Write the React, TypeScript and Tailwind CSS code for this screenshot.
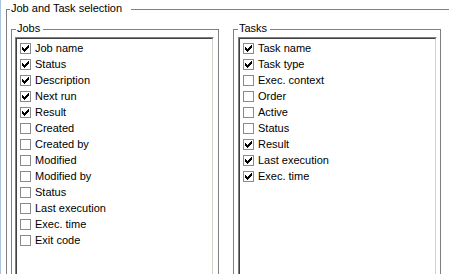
type Item = { label: string; checked: boolean };

const jobItems: Item[] = [
  { label: 'Job name', checked: true },
  { label: 'Status', checked: true },
  { label: 'Description', checked: true },
  { label: 'Next run', checked: true },
  { label: 'Result', checked: true },
  { label: 'Created', checked: false },
  { label: 'Created by', checked: false },
  { label: 'Modified', checked: false },
  { label: 'Modified by', checked: false },
  { label: 'Status', checked: false },
  { label: 'Last execution', checked: false },
  { label: 'Exec. time', checked: false },
  { label: 'Exit code', checked: false },
];

const taskItems: Item[] = [
  { label: 'Task name', checked: true },
  { label: 'Task type', checked: true },
  { label: 'Exec. context', checked: false },
  { label: 'Order', checked: false },
  { label: 'Active', checked: false },
  { label: 'Status', checked: false },
  { label: 'Result', checked: true },
  { label: 'Last execution', checked: true },
  { label: 'Exec. time', checked: true },
];

// classic 7x7 pixel check mark
const CheckBox = ({ checked }: { checked: boolean }) => (
  <div className="w-[11px] h-[11px] shrink-0 border border-[#8a8a8a] bg-white">
    {checked && (
      <svg width="9" height="9" viewBox="0 0 9 9" shapeRendering="crispEdges">
        <path
          d="M7 1h1v1H7zM6 2h2v1H6zM1 3h1v1H1zM5 3h3v1H5zM1 4h2v1H1zM4 4h3v1H4zM1 5h5v1H1zM2 6h3v1H2zM3 7h1v1H3z"
          fill="#000"
        />
      </svg>
    )}
  </div>
);

const CheckList = ({ items }: { items: Item[] }) => (
  <div className="h-[300px] border-t border-l border-[#808080] border-r-white border-b-white border-r border-b">
    <div className="h-full bg-white border-t border-l border-[#404040] border-r border-b border-r-[#d4d0c8] border-b-[#d4d0c8] pt-[1px] pl-[3px]">
      {items.map((item, i) => (
        <div key={i} className="h-[16px] flex items-center gap-[4px] whitespace-nowrap">
          <CheckBox checked={item.checked} />
          <span>{item.label}</span>
        </div>
      ))}
    </div>
  </div>
);

const Group = ({ title, items, pad }: { title: string; items: Item[]; pad: string }) => (
  <fieldset className="w-[208px] shrink-0 min-w-0 border border-[#808080]">
    <legend className="ml-[4px] pl-[1px] pr-[3px] pb-[2px]">{title}</legend>
    <div className={pad}>
      <CheckList items={items} />
    </div>
  </fieldset>
);

export default function App() {
  return (
    <div className="w-[449px] h-[274px] overflow-hidden bg-white flex pt-[2px] font-['Liberation_Sans',Arial,sans-serif] text-[11px] leading-[13px] text-black">
      <div className="w-px shrink-0 bg-[#a9c4df] -mt-[2px] h-[300px]" />
      <fieldset className="ml-[5px] flex-1 min-w-0 border-l border-t border-[#808080]">
        <legend className="ml-[3px] pl-[1px] pr-[9px] pb-[2px]">Job and Task selection</legend>
        <div className="flex gap-[14px] pl-[4px] pt-[5px]">
          <Group title="Jobs" items={jobItems} pad="pl-[3px] pr-[4px]" />
          <Group title="Tasks" items={taskItems} pad="pl-[4px] pr-[3px]" />
        </div>
      </fieldset>
    </div>
  );
}
